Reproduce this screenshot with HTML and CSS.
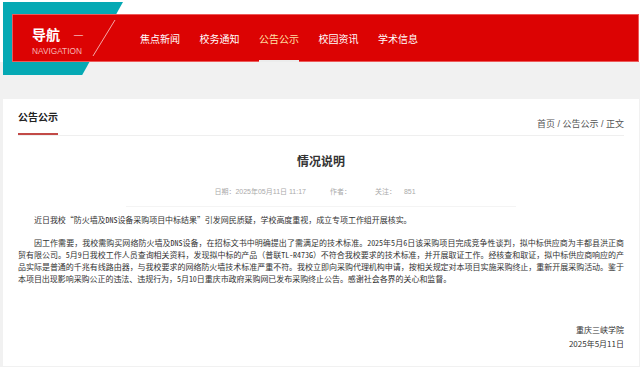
FILE: index.html
```html
<!DOCTYPE html>
<html lang="zh-CN">
<head>
  <meta charset="UTF-8">
  <meta name="viewport" content="width=device-width, initial-scale=1.0">
  <title>情况说明</title>
  <link rel="stylesheet" href="styles.css">
</head>
<body>
  <div class="header">
    <div class="navbar">
      <div class="logo">
        <div class="logo-cn">导航<span class="dash">—</span></div>
        <div class="logo-en">NAVIGATION</div>
      </div>
      <svg class="slash" width="24" height="38" viewBox="0 0 24 38">
        <line x1="23" y1="1" x2="1" y2="37" stroke="rgba(255,255,255,0.65)" stroke-width="1"/>
      </svg>
      <ul class="menu">
        <li>焦点新闻</li>
        <li>校务通知</li>
        <li class="active">公告公示</li>
        <li>校园资讯</li>
        <li>学术信息</li>
      </ul>
    </div>
  </div>

  <div class="card">
    <div class="section-head">
      <h3 class="section-title">公告公示</h3>
      <div class="crumbs">首页 / 公告公示 / 正文</div>
    </div>

    <h1 class="article-title">情况说明</h1>
    <div class="meta">
      <span>日期：2025年05月11日 11:17</span>
      <span class="gap">作者：</span>
      <span class="gap">关注：<em>851</em></span>
    </div>

    <div class="article-body">
      <p>近日我校“防火墙及DNS设备采购项目中标结果”引发网民质疑，学校高度重视，成立专项工作组开展核实。</p>
      <p>因工作需要，我校需购买网络防火墙及DNS设备，在招标文书中明确提出了需满足的技术标准。2025年5月6日该采购项目完成竞争性谈判，拟中标供应商为丰都县洪正商贸有限公司。5月9日我校工作人员查询相关资料，发现拟中标的产品（普联TL-R473G）不符合我校要求的技术标准，并开展取证工作。经核查和取证，拟中标供应商响应的产品实际是普通的千兆有线路由器，与我校要求的网络防火墙技术标准严重不符。我校立即向采购代理机构申请，按相关规定对本项目实施采购终止，重新开展采购活动。鉴于本项目出现影响采购公正的违法、违规行为，5月10日重庆市政府采购网已发布采购终止公告。感谢社会各界的关心和监督。</p>
    </div>

    <div class="sign">
      <p>重庆三峡学院</p>
      <p>2025年5月11日</p>
    </div>
  </div>
</body>
</html>
```

FILE: styles.css
```css
body {
  margin: 0;
  background-color: #f1f1f1;
  font-family: "Liberation Sans", "Noto Sans CJK SC", sans-serif;
  color: #333;
}

.header {
  position: relative;
  background-color: #fff;
  padding-top: 14px;
}

/* teal block behind the red bar */
.header::before {
  content: "";
  position: absolute;
  left: 3px;
  top: 2px;
  width: 120px;
  height: 73px;
  background-color: #05a9b4;
  clip-path: polygon(0 0, 100% 0, 66% 100%, 0 100%);
}

.navbar {
  position: relative;
  display: flex;
  height: 48px;
  margin: 0 1px 0 12px;
  background-color: #dc0303;
  box-shadow: inset 0 0 0 1px #ec5a5a;
}

.logo {
  padding: 13px 0 0 20px;
  width: 60px;
  color: #fff;
}

.logo-cn {
  font-size: 14px;
  font-weight: bold;
  line-height: 16px;
}

.dash {
  font-weight: normal;
  font-size: 9px;
  margin-left: 14px;
  vertical-align: 2px;
}

.logo-en {
  margin-top: 3px;
  font-size: 8.3px;
  line-height: 10px;
  color: #f7b4b4;
}

.slash {
  margin: 5px 0 0 0;
}

.menu {
  display: flex;
  gap: 19.5px;
  list-style: none;
  margin: 0 0 0 24px;
  padding: 0;
}

.menu li {
  display: flex;
  align-items: center;
  font-size: 10px;
  color: #fff;
  border-bottom: 2px solid transparent;
  padding-top: 2px;
}

.menu li.active {
  color: #ffe1a6;
  border-bottom-color: #ececec;
}

.card {
  margin: 37px 1px 0 3px;
  padding: 0 15px;
  min-height: 267px;
  background-color: #fff;
}

.section-head {
  display: flex;
  justify-content: space-between;
  border-bottom: 1px solid #efefef;
}

.section-title {
  margin: 0;
  padding: 12px 0 8px;
  font-size: 10px;
  line-height: 14px;
  color: #222;
  border-bottom: 2px solid #c24a47;
}

.crumbs {
  align-self: flex-end;
  margin-bottom: 5px;
  font-size: 9px;
  line-height: 12px;
  color: #555;
}

.article-title {
  margin: 18px 0 0;
  text-align: center;
  font-size: 12px;
  line-height: 16px;
  color: #333;
}

.meta {
  width: 390px;
  margin: 17px auto 0;
  padding: 0 12px 9px 0;
  box-sizing: border-box;
  border-bottom: 1px solid #f4f4f4;
  text-align: center;
  font-size: 7px;
  line-height: 10px;
  color: #aaa;
}

.meta .gap {
  margin-left: 22px;
}

.meta em {
  font-style: normal;
  margin-left: 8px;
}

.article-body {
  margin-top: 7px;
  font-family: "Noto Sans Mono CJK SC", "Noto Sans CJK SC", sans-serif;
  font-size: 8px;
  line-height: 12px;
  letter-spacing: -0.05px;
  color: #333;
  text-autospace: no-autospace;
  text-spacing-trim: space-all;
}

.article-body p {
  margin: 0 0 11px;
  text-indent: 2em;
  text-align: justify;
}

.sign {
  margin-top: 38px;
  text-align: right;
  font-family: "Noto Sans CJK SC", sans-serif;
  font-size: 8px;
  line-height: 14px;
}

.sign p {
  margin: 0;
}
```
